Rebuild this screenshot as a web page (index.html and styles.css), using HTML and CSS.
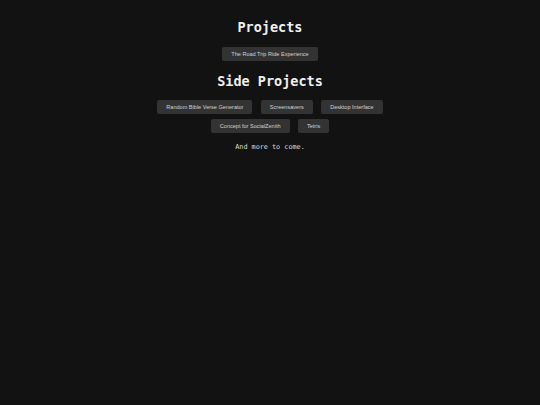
FILE: index.html
```html
<!DOCTYPE html>
<html lang="en">
<head>
<meta charset="utf-8">
<title>Projects</title>
<link rel="stylesheet" href="styles.css">
</head>
<body>
<main class="page">
  <section class="section">
    <h1 class="heading">Projects</h1>
    <div class="btn-group">
      <button class="btn">The Road Trip Ride Experience</button>
    </div>
  </section>
  <section class="section section-side">
    <h1 class="heading">Side Projects</h1>
    <div class="btn-group btn-group-side">
      <button class="btn">Random Bible Verse Generator</button>
      <button class="btn">Screensavers</button>
      <button class="btn">Desktop Interface</button>
      <button class="btn">Concept for SocialZenith</button>
      <button class="btn">Tetris</button>
    </div>
  </section>
  <p class="more">And more to come.</p>
</main>
</body>
</html>
```
FILE: styles.css
```css
html, body {
  margin: 0;
  padding: 0;
  background: #121212;
  height: 100%;
}
body {
  font-family: "Liberation Sans", Arial, sans-serif;
  color: #e6e6e6;
}
.page {
  display: flex;
  flex-direction: column;
  align-items: center;
  padding-top: 19px;
}
.section {
  display: flex;
  flex-direction: column;
  align-items: center;
}
.section-side {
  margin-top: 12px;
}
.heading {
  margin: 0;
  font-family: "DejaVu Sans Mono", monospace;
  font-weight: bold;
  font-size: 13.5px;
  line-height: 16px;
  color: #f0f0f0;
}
.btn-group {
  display: flex;
  flex-wrap: wrap;
  justify-content: center;
  gap: 5px 8.4px;
  margin-top: 12px;
}
.btn-group-side {
  margin-top: 10.5px;
  width: 240px;
}
.btn {
  font-family: "Liberation Sans", Arial, sans-serif;
  font-size: 5.55px;
  height: 14px;
  line-height: 14px;
  padding: 0 9px;
  border: none;
  border-radius: 2px;
  background: #333333;
  color: #d2d2d2;
  white-space: nowrap;
}
.more {
  margin: 10px 0 0;
  font-family: "DejaVu Sans Mono", monospace;
  font-size: 6.8px;
  line-height: 9px;
  color: #dcdcdc;
}
```
